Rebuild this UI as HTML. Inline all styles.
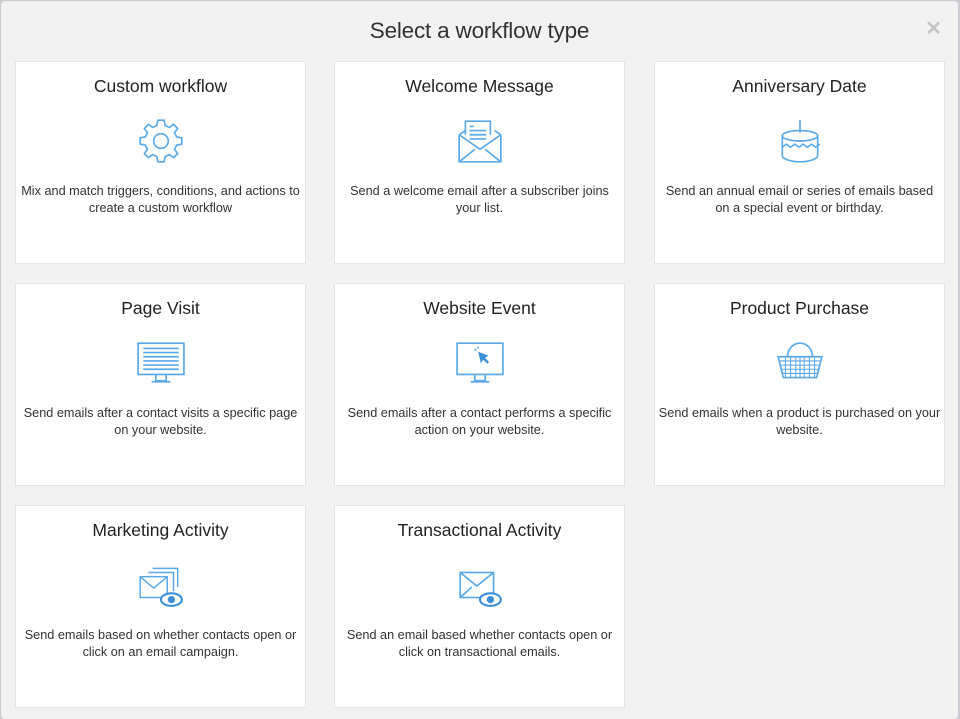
<!DOCTYPE html>
<html><head><style>
*{margin:0;padding:0;box-sizing:border-box}
body{width:960px;height:719px;background:#c9ccd0;font-family:"Liberation Sans",sans-serif;overflow:hidden;position:relative}
.modal{position:absolute;left:1px;top:1px;width:957px;height:718px;background:#f2f2f2;border-radius:4px}
h1{position:absolute;top:17px;left:0;width:100%;text-align:center;font-weight:normal;font-size:22.5px;color:#333;letter-spacing:-0.2px}
.x{position:absolute;right:16px;top:15px;font-size:20px;color:#c4c4c4;font-weight:bold}
.card{position:absolute;width:291px;height:203px;background:#fff;border:1px solid #e4e4e4;text-align:center}
.card h2{position:absolute;top:14px;width:100%;font-weight:normal;font-size:17.5px;color:#222}
.card svg{position:absolute;left:50%;top:54px;transform:translateX(-50%)}
.card p{position:absolute;top:121px;left:0;width:100%;padding:0 3px;font-size:12.7px;line-height:17px;color:#333}
</style></head><body>
<div class="modal">
<h1>Select a workflow type</h1><div class="x">✕</div>
</div>
<div class="card" style="left:15px;top:61px"><h2>Custom workflow</h2>
<svg width="50" height="50" viewBox="0 0 48 48" fill="none" stroke="#5aa9e6" stroke-width="1.6"><path d="M21 4h6l1 5 4 2 4-3 4 4-3 4 2 4 5 1v6l-5 1-2 4 3 4-4 4-4-3-4 2-1 5h-6l-1-5-4-2-4 3-4-4 3-4-2-4-5-1v-6l5-1 2-4-3-4 4-4 4 3 4-2z"/><circle cx="24" cy="24" r="7"/></svg>
<p>Mix and match triggers, conditions, and actions to create a custom workflow</p></div>
<div class="card" style="left:334px;top:61px"><h2>Welcome Message</h2>
<svg width="50" height="50" viewBox="0 0 48 48" fill="none" stroke="#5aa9e6" stroke-width="1.6"><path d="M10 18v-13h24v13M14 10h4M14 14h16M14 18h16M14 22h16"/><path d="M4 18l20 14 20-14M4 18v26h40v-26M4 44l15-12M44 44l-15-12M4 18l6-4M44 18l-6-4"/></svg>
<p>Send a welcome email after a subscriber joins your list.</p></div>
<div class="card" style="left:654px;top:61px"><h2>Anniversary Date</h2>
<svg width="50" height="50" viewBox="0 0 48 48" fill="none" stroke="#5aa9e6" stroke-width="1.6"><path d="M24 4v12"/><ellipse cx="24" cy="19" rx="17" ry="5"/><path d="M7 19v19c0 3 8 6 17 6s17-3 17-6V19M7 30l4-3 4 3 4-3 4 3 4-3 4 3 4-3 4 3 4-3"/></svg>
<p>Send an annual email or series of emails based on a special event or birthday.</p></div>

<div class="card" style="left:15px;top:283px"><h2>Page Visit</h2>
<svg width="50" height="50" viewBox="0 0 48 48" fill="none" stroke="#5aa9e6" stroke-width="1.6"><rect x="2" y="5" width="44" height="30"/><path d="M7 10h34M7 14h34M7 18h34M7 22h34M7 26h34M7 30h34M19 35v6h10v-6M15 42h18" /></svg>
<p>Send emails after a contact visits a specific page on your website.</p></div>
<div class="card" style="left:334px;top:283px"><h2>Website Event</h2>
<svg width="50" height="50" viewBox="0 0 48 48" fill="none" stroke="#5aa9e6" stroke-width="1.6"><rect x="2" y="5" width="44" height="30"/><path d="M19 35v6h10v-6M15 42h18"/><path d="M23 14l2 9 2-3 4 4 1-1-4-4 3-2z" fill="#3a8fd6" stroke="#3a8fd6" stroke-width="1"/><path d="M19 12a5 5 0 0 1 4-3" stroke-dasharray="2 1.5"/></svg>
<p>Send emails after a contact performs a specific action on your website.</p></div>
<div class="card" style="left:654px;top:283px"><h2>Product Purchase</h2>
<svg width="50" height="50" viewBox="0 0 48 48" fill="none" stroke="#5aa9e6" stroke-width="1.6"><path d="M12 18a12 13 0 0 1 24 0"/><path d="M3 18h42l-5 20H8z"/><path d="M4 22h40M5 26h38M6 30h36M7 34h34M10 18v20M15 18v20M20 18v20M24 18v20M28 18v20M33 18v20M38 18v20" stroke-width="1"/></svg>
<p>Send emails when a product is purchased on your website.</p></div>

<div class="card" style="left:15px;top:505px"><h2>Marketing Activity</h2>
<svg width="50" height="50" viewBox="0 0 48 48" fill="none" stroke="#5aa9e6" stroke-width="1.4"><path d="M16 8h24v18M12 12h24v18"/><rect x="4" y="16" width="26" height="20"/><path d="M4 16l13 11 13-11"/><ellipse cx="34" cy="38" rx="10" ry="6" fill="#fff" stroke="#3a8fd6" stroke-width="2"/><circle cx="34" cy="38" r="3.5" fill="#3a8fd6" stroke="none"/></svg>
<p>Send emails based on whether contacts open or click on an email campaign.</p></div>
<div class="card" style="left:334px;top:505px"><h2>Transactional Activity</h2>
<svg width="50" height="50" viewBox="0 0 48 48" fill="none" stroke="#5aa9e6" stroke-width="1.6"><rect x="5" y="12" width="32" height="24"/><path d="M5 12l16 13 16-13M5 36l11-10"/><ellipse cx="34" cy="38" rx="10" ry="6" fill="#fff" stroke="#3a8fd6" stroke-width="2"/><circle cx="34" cy="38" r="3.5" fill="#3a8fd6" stroke="none"/></svg>
<p>Send an email based whether contacts open or click on transactional emails.</p></div>
</body></html>
